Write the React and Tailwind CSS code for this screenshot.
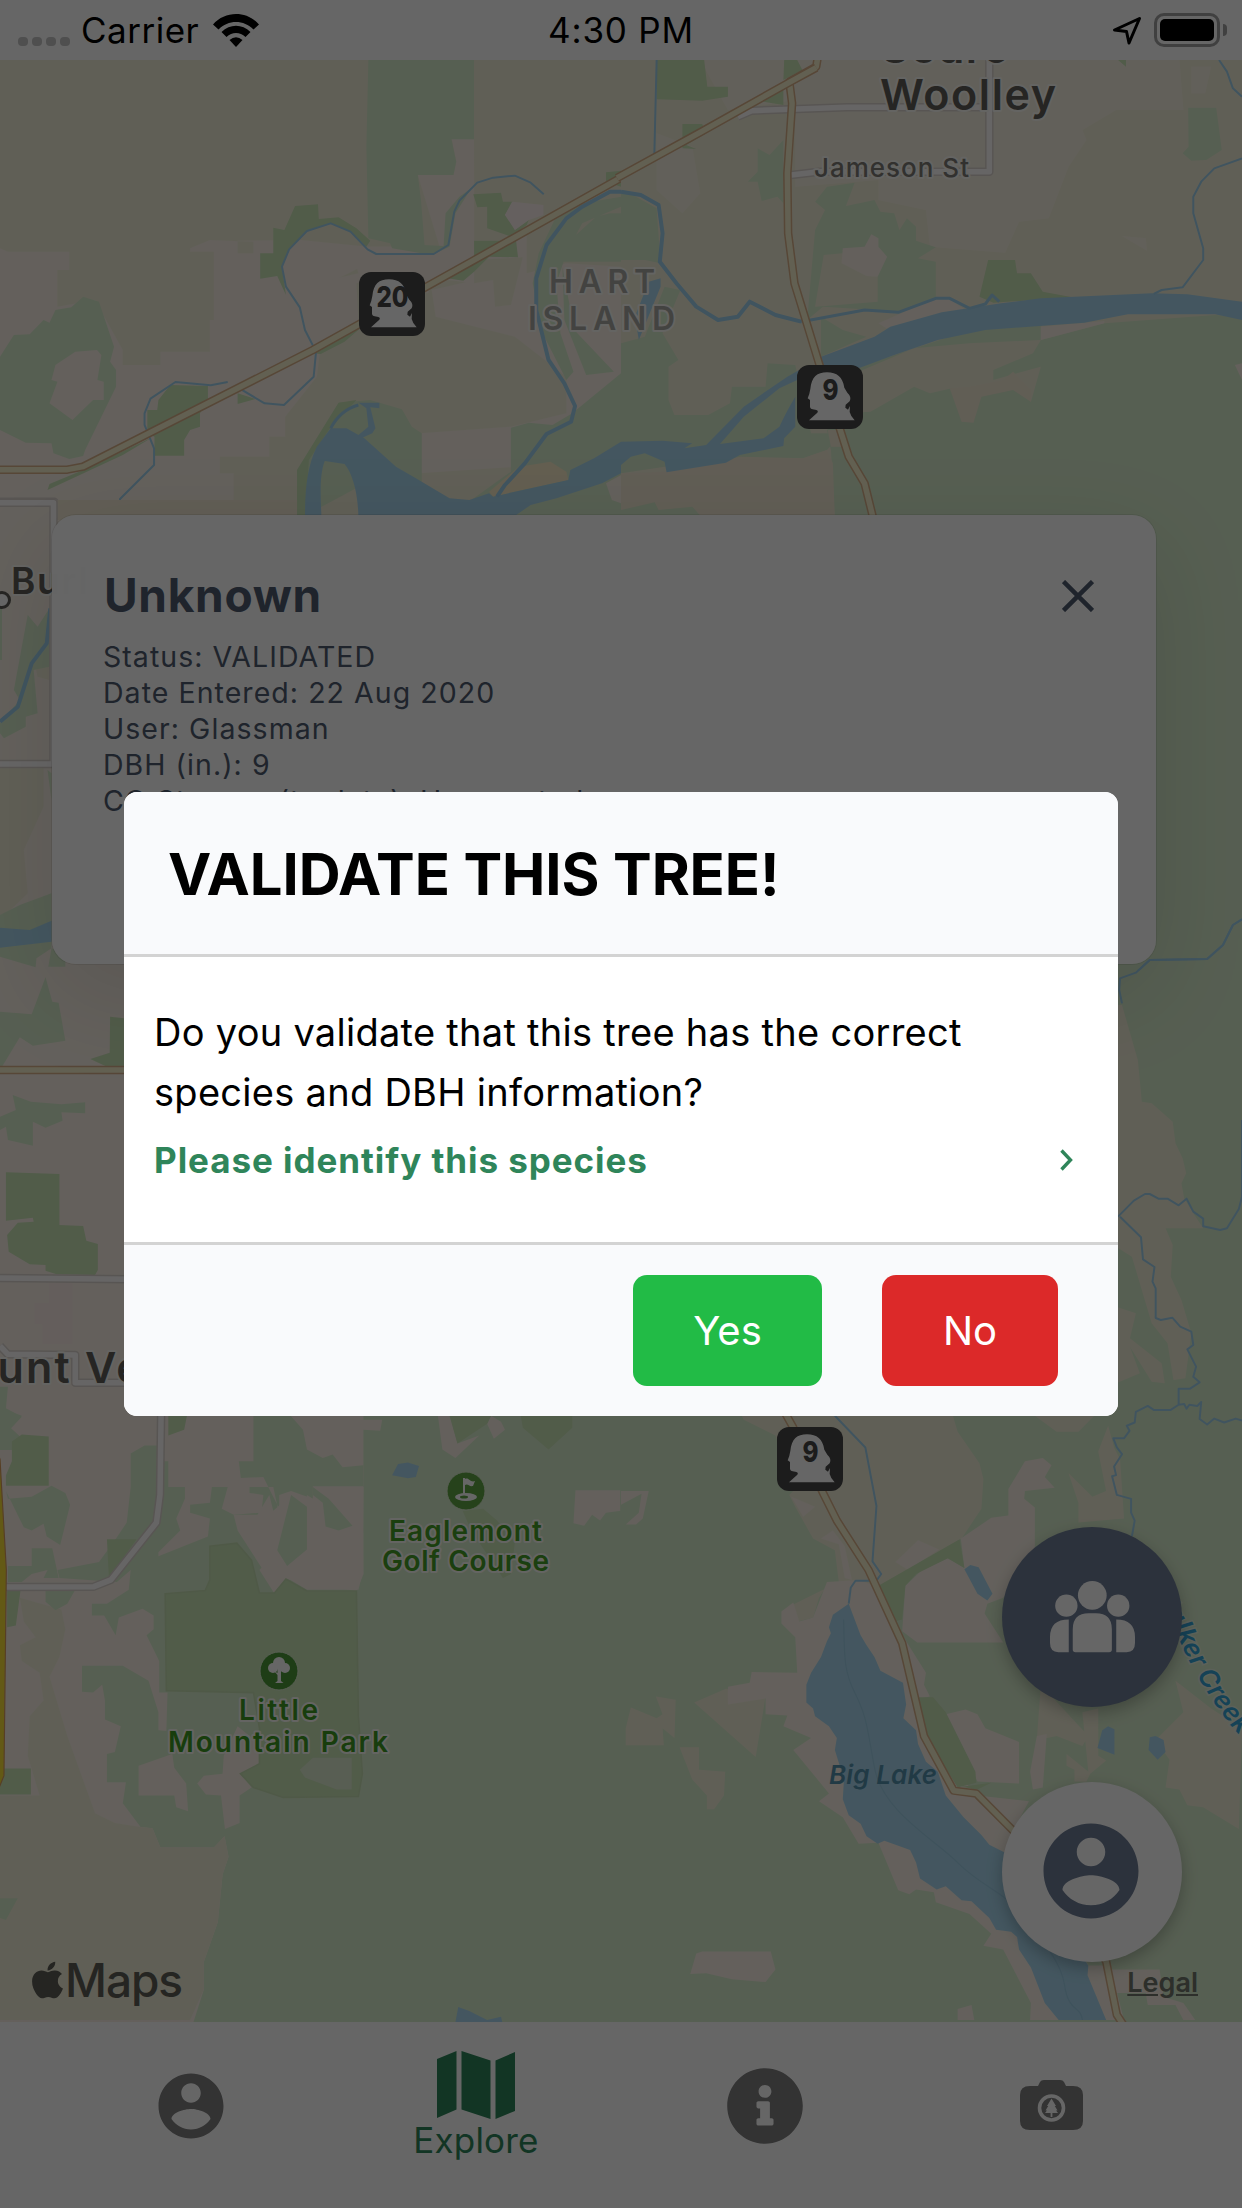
import React from "react";
import { FaApple, FaInfoCircle } from "react-icons/fa";

const LIGHT = "#f9f1e6";
const FIELD = "#f1eed8";
const FOREST = "#d8edcd";
const PARK = "#cae5b7";
const WATER = "#aad8ef";

const ACCOUNT =
  "M12 2C6.48 2 2 6.48 2 12s4.48 10 10 10 10-4.48 10-10S17.52 2 12 2zm0 3c1.66 0 3 1.34 3 3s-1.34 3-3 3-3-1.34-3-3 1.34-3 3-3zm0 14.2c-2.5 0-4.71-1.28-6-3.22.03-1.99 4-3.08 6-3.08 1.99 0 5.97 1.09 6 3.08-1.29 1.94-3.5 3.22-6 3.22z";

function Tile({ x = 0, y, children }) {
  return (
    <g transform={`translate(${x} ${y}) scale(.39605 .33333)`}>{children}</g>
  );
}

function Highway({ d }) {
  return (
    <g fill="none" strokeLinejoin="round">
      <path d={d} stroke="#d9b18a" strokeWidth="8.5" vectorEffect="non-scaling-stroke" />
      <path d={d} stroke="#f6f0cc" strokeWidth="5.5" vectorEffect="non-scaling-stroke" />
    </g>
  );
}

function Street({ d }) {
  return (
    <g fill="none" strokeLinejoin="round">
      <path d={d} stroke="#dcd5cf" strokeWidth="8.5" vectorEffect="non-scaling-stroke" />
      <path d={d} stroke="#fffdfd" strokeWidth="5.5" vectorEffect="non-scaling-stroke" />
    </g>
  );
}

function Stream({ d, w = 2 }) {
  return <path d={d} fill="none" stroke="#a0d2ee" strokeWidth={w} strokeLinejoin="round" vectorEffect="non-scaling-stroke" />;
}

function Label({ x, y, size, width, fill, halo = "#fbfaf4", weight = 600, children, ...rest }) {
  return (
    <text
      x={x}
      y={y}
      fontSize={size}
      fontWeight={weight}
      textLength={width}
      fill={fill}
      stroke={halo}
      strokeWidth="4"
      strokeLinejoin="round"
      style={{ paintOrder: "stroke" }}
      {...rest}
    >
      {children}
    </text>
  );
}

function RouteShield({ x, y, label }) {
  return (
    <g transform={`translate(${x} ${y})`}>
      <rect width="66" height="64" rx="12" fill="#464646" />
      <path
        transform="translate(-4 -4) scale(.3333)"
        fill="#fff"
        d="M48 178L73 155Q77 149 70 147L56 144Q50 142 51 132V117L44 112Q50 98 52 84C56 48 72 34 102 34S149 48 154 80L163 95Q177 108 170 121L158 131L157 140L165 146L171 135L170 153L175 165L185 178Z"
      />
      <text
        x="33.5"
        y="35"
        fontSize="29"
        fontWeight="800"
        textAnchor="middle"
        fill="#464646"
        textLength={label.length > 1 ? 32 : 16}
        lengthAdjust="spacingAndGlyphs"
      >
        {label}
      </text>
    </g>
  );
}

function MapCanvas() {
  return (
    <svg className="block h-full w-full" viewBox="0 60 1242 1962" fontFamily="Inter, sans-serif">
      <rect width="1242" height="2208" fill={LIGHT} />

      <Tile y="0">
        <path fill={FIELD} d="M0 180H1568V800L1430 790 1330 820 1200 780V840L1090 870 1100 950 1300 1010 1430 1130V1240L1290 1280 1060 1300 1060 1420 1568 1380V1560H590V1420H555V1370H680V1310H720V1250L800 1130 830 850 930 790 1000 740H930L760 720 600 722V760H640V725L530 720 480 745V755H540V960H530V1055H405V1095H310V1050L240 900 145 920V810H175V755H20L0 745Z" />
        <path fill={LIGHT} d="M1055 525H1145L1152 485 1140 415 1197 418V722H1300V700L1330 690 1330 820 1310 990 1300 1010 1270 910 1200 850 1130 840 1090 860 1080 880 920 800 935 740 1110 740ZM760 890L830 840 905 820 900 800 940 790 960 830 900 850 905 960 800 1040Z" />
        <path fill={FIELD} d="M1197 418L1440 560 1400 600 1300 560 1200 560ZM1197 780L1320 772 1290 915 1250 920 1245 840 1197 850Z" />
        <path fill={FOREST} d="M930 180H1197V418H1140L1152 485 1145 525H1055L1063 600 1072 735 1120 738 1125 640 1160 590 1190 565 1150 640 1135 740 1090 765 990 745 985 730 930 715 925 440Z" />
        <path fill={PARK} d="M745 618 803 613 805 657 855 652 900 685 935 722 925 740 885 695 835 670 775 693 730 748 712 800 722 885 700 828 657 836V760H690V683L718 690ZM1195 583 1265 578 1270 605 1295 605 1275 645 1290 655 1300 690 1335 660 1330 675 1290 710 1230 685V620L1205 622ZM1197 722H1303L1308 772 1235 770 1197 815 1170 842 1130 835 1197 780ZM1530 517 1568 512V560L1530 545Z" />
        <path fill="#fdf0ee" d="M1293 605 1372 615V645L1335 660 1300 690 1275 645Z" />
        <path fill={FOREST} fillRule="evenodd" d="M0 1070L35 1005 75 1003 110 960 125 968 140 930 180 922 210 890 250 905 288 1040 278 1085 293 1110V1160L215 1350 210 1368 175 1377 135 1360 130 1330 65 1328 0 1290ZM140 1095L190 1055 245 1050 256 1065 246 1140 262 1145V1200H235L183 1260 125 1210 145 1145 130 1140Z" />
        <path fill={PARK} d="M400 1200L430 1155 525 1158V1200L505 1240V1280L480 1290 465 1320V1367H390V1310L372 1300V1230H397ZM120 1470L125 1452 210 1410 385 1312 310 1365ZM600 1180 645 1197 600 1212ZM790 1060 910 985 870 1025 810 1062Z" />
        <path fill={FOREST} d="M750 1560V1410L855 1208 935 1200 1015 1228 1040 1280 1065 1300V1450L1000 1400Z" />
        <path fill={PARK} d="M750 1560V1410L855 1208 900 1200 830 1290 780 1380 770 1560Z" />
        <path fill={FOREST} d="M1290 1283 1335 1268 1395 1275 1445 1240 1568 1120V1560H1340L1190 1500 1290 1415ZM1568 590L1470 610 1400 660 1360 760 1345 850 1370 1000 1430 1140 1448 1115 1415 1000 1405 850 1430 760 1470 670 1568 620ZM1568 640H1540L1505 650 1440 720 1410 785H1568ZM1420 800 1425 960 1480 1125 1550 1115 1450 990Z" />
        <path fill="#f8ebc9" d="M1310 1400 1390 1385 1430 1415 1435 1440 1245 1490 1235 1475Z" />
        <path fill={WATER} d="M835 1285 875 1285 920 1315 1000 1400 1050 1435 1135 1495 1185 1500 1235 1480 1245 1490 1435 1440 1440 1410 1500 1375 1568 1325V1420L1520 1450 1405 1495 1340 1515 1285 1560H905C905 1480 890 1420 870 1392L820 1383C805 1430 810 1500 812 1560H770C770 1470 775 1400 800 1340ZM905 1208H958V1225L935 1222 948 1285 940 1300 912 1315 905 1305 930 1280 925 1225Z" />
        <path fill={LIGHT} d="M1568 1425L1530 1450 1545 1500 1568 1510Z" />
        <Stream d="M1373 583 1340 548 1300 527 1245 533 1205 548 1160 602 1147 635 1132 735 1095 762H950L928 748 885 695 835 670 775 693 730 748 712 800 722 860 757 922 770 990 798 1055 792 1130 717 1215 668 1210 593 1157" />
        <Stream d="M575 1146 532 1156 443 1146 380 1196 365 1240V1275L389 1345V1395L303 1497V1530L310 1560" />
        <Stream w="4" d="M1568 575H1540L1470 620 1430 655 1380 735 1354 835V930L1385 1080 1425 1150 1452 1218 1442 1265 1380 1302 1325 1390 1275 1455 1255 1490" />
        <Stream d="M835 1285C850 1250 875 1225 905 1215" w="3" />
        <Street d="M0 1505H137V1560" />
        <Highway d="M0 1409H170L210 1400 790 1050 1190 785 1580 525" />
      </Tile>

      <Tile x="621" y="0">
        <rect y="180" width="1600" height="1400" fill={FIELD} />
        <path fill="#f6f0e2" d="M200 180H1280L1410 180 1420 330H1250L1165 390 1175 420 1130 500 1080 655 1005 665 970 758 780 740 770 630 650 600V540L440 560V300L270 330ZM90 400 180 440 200 580 155 640 90 570ZM1440 200H1490L1475 280H1440ZM1265 708 1325 715 1328 752Z" />
        <path fill={PARK} d="M90 180H210L218 260H270V290L205 302 90 298ZM412 180H445L458 210 410 240ZM330 300 410 250V315ZM155 372H205L215 400 165 435 190 447 155 445ZM1255 180H1275V200Z" />
        <path fill={FOREST} d="M345 445 375 465 410 420V610L395 590 355 603 345 545 320 545 345 515ZM490 605 520 560 590 548 568 618 640 600 655 635 690 640 703 690 722 655 745 680V722L795 742 750 775 795 785V905L700 935 640 930 510 920 470 960 490 690 515 630ZM1432 323H1503L1517 450 1478 480 1440 482 1418 460 1433 440Z" />
        <path fill={FIELD} d="M512 765 560 760 648 830V905L490 920Z" />
        <path fill={LIGHT} d="M560 745 615 740 632 703 650 715V740L672 770 648 830 620 828 557 790ZM650 970 790 897 830 897 870 930 810 940 670 985Z" />
        <path fill={PARK} d="M927 780H995L1000 820 1035 820 1065 875 1140 892 940 908 905 890Z" />
        <path fill={FOREST} d="M0 640V780H60L100 790 90 625 30 585 0 580ZM0 1030 60 1010 110 860 150 870 105 1000 145 1080 120 1100V1200L135 1245H220L275 1210 280 1160H365L370 1090 440 1095 480 1300H560L520 1350 460 1375H300L110 1400 0 1420ZM1568 950V1560H540L530 1350 520 1290 560 1240 630 1235 740 1160 780 1180 835 1165 890 1185 990 1165 1035 1205 1060 1100 940 1140V1110L1040 1060 1060 1020 1220 970 1500 945ZM500 1110 640 1085 880 990 1060 970V1020L880 1030 740 1045 600 1115ZM505 950 560 990 620 1010 505 1070Z" />
        <path fill={LIGHT} d="M1060 980 1220 963V970L1060 1020ZM1550 1095 1568 1090V1140Z" />
        <path fill="#f3ead5" d="M830 1165 860 1265 890 1268 910 1190 990 1170 1035 1205V1170L990 1115 965 1140 880 1160ZM0 1420 110 1415 300 1370 460 1375 520 1350 535 1390 540 1560H0ZM522 1290 550 1290 560 1340 530 1340Z" />
        <path fill={FOREST} d="M0 1530 85 1507 95 1530 180 1520 210 1560H0Z" />
        <path fill={WATER} d="M505 1070 640 1010 680 980 810 937 960 910 1060 895 1340 880 1430 883 1568 905V960L1500 943H1280L1170 968 920 990 800 1020 690 1065 600 1105 510 1110ZM70 845 100 835V860L45 1020 35 950Z" />
        <path fill={WATER} d="M450 1110 420 1130 310 1220 215 1335 160 1345 180 1330 105 1322 0 1325V1395L25 1370 60 1360 110 1385 115 1417 265 1388 300 1365 410 1338 412 1315 440 1280V1190Q415 1240 400 1280L360 1315 250 1332 310 1250 400 1165 445 1140Z" />
        <Stream w="4" d="M0 575 50 585 95 615 105 700 98 785 140 850 190 920 245 960 295 950 325 905 390 945 455 965" />
        <Stream w="3" d="M455 965 615 930 700 937 795 895 830 895 880 925 920 912 937 885 955 905" />
        <Stream d="M90 180 84 470M1510 180 1530 215 1545 265 1568 290M1568 475 1498 505 1465 545 1445 590V640L1470 745V780L1418 862 1365 870 1345 882" />
        <Street d="M295 350 330 332 570 322H930M930 180V515H870M430 525 500 515H880" />
        <Highway d="M497 170 493 200 425 245 432 310 420 520 422 700 438 850 500 1090 575 1370 615 1450 640 1570" />
        <Highway d="M-10 534 200 397 425 247 493 203" />
      </Tile>

      <Tile y="500">
        <path fill="#f3ead5" d="M145 0H590V60H145ZM590 0H750V60H590Z" />
        <path fill={FIELD} d="M0 805H110V920L60 1050 70 1180 0 1260ZM85 480H125V540L95 530Z" />
        <path fill={FOREST} d="M0 325H5V480H0ZM70 345 95 380 125 325V500L85 510 95 640 65 650V680L10 715 0 700V670L50 600 35 570ZM0 1245 50 1215 130 1180V1345L165 1360V1400H122L130 1345 92 1375 90 1402 0 1370ZM120 810 130 820V900Z" />
        <path fill={WATER} d="M0 1283 75 1290 130 1262V1325L0 1343Z" />
        <Stream w="4" d="M127 325 118 430 80 490 45 620 0 665" />
        <Street d="M0 8H135V790M0 792H133" />
      </Tile>

      <Tile x="621" y="500">
        <path fill={FOREST} d="M1180 30H1568V1500H1180Z" />
        <Stream d="M1568 1258 1545 1275 1520 1335 1480 1377 1335 1380 1300 1418 1260 1435 1258 1470 1263 1500" />
      </Tile>

      <Tile y="950">
        <path fill={FOREST} d="M0 185 80 193 115 82 132 155 148 158 165 272 83 287 50 262 5 350 0 350ZM32 435 78 455 155 463 215 457V490L155 487 158 512 115 533 83 515V587L20 570 15 530 0 540V500L40 480ZM0 1310H20L15 1375 55 1400 28 1435 60 1470 40 1500H0Z" />
        <path fill={PARK} d="M278 200 313 205V350H270L228 327 277 308ZM15 667 150 672V825L210 828 218 872 247 882V960L240 975 143 973 115 962V945L75 943 22 905 18 855 45 818 85 815 83 803 15 812Z" />
        <path fill="#fbeae6" d="M123 998H183V1183H107V1123H87V1060H123Z" />
        <Highway d="M0 360H330" />
        <Street d="M0 984 330 988M0 1188 20 1213 190 1215V1298H330" />
      </Tile>

      <Tile x="621" y="950">
        <path fill={FOREST} d="M1180 60H1580V1500H1180Z" />
        <path fill={FIELD} d="M1255 165H1265L1305 330 1315 455 1340 460 1393 515 1400 580 1418 625 1427 670 1415 700 1422 745 1445 790 1470 835H1375L1393 885 1388 980 1415 1050 1440 1150 1425 1285 1395 1290 1380 1180 1340 1120 1290 920 1250 890V400ZM1250 1070 1300 1090 1285 1165 1365 1240 1373 1300 1340 1295 1285 1190 1310 1270 1250 1300Z" />
        <Stream d="M1568 -92 1545 -75 1520 -15 1480 27 1335 30 1300 68 1260 85 1258 120 1265 160M1255 800 1295 752 1323 732H1335L1357 746H1380L1408 766 1428 746 1445 785 1470 806V829L1513 840 1530 835 1560 777 1568 740V510M1260 800 1313 862 1318 928 1347 951 1342 995 1350 1015V1104L1363 1110 1392 1103 1412 1130 1440 1145 1445 1185 1430 1198 1452 1250 1445 1280 1461 1297 1437 1316H1408V1367L1388 1380H1345L1330 1370 1300 1386 1297 1413 1277 1425 1284 1438 1270 1465H1243L1252 1500M1408 1367 1422 1365 1428 1378 1435 1366 1455 1368 1465 1357 1461 1408 1480 1422 1498 1405 1523 1417 1552 1405 1568 1412" />
      </Tile>

      <g transform="translate(0 1400) scale(.39605 .3954)">
        <path fill={FOREST} d="M640 0V155H603L608 197 665 195 705 275V240L735 230 790 250V218H918V0ZM917 0H1600V1600H480L515 1490V1420L550 1320 562 1200 577 1155 567 1103 540 1132H405L385 1083 355 1080 310 1020 318 967H270V895L290 890 305 825 265 808V760L258 720 235 740 207 738V672H310L375 710 400 790V835L420 837 423 740 402 740V660L370 595 388 580V545L360 528 300 550 292 595 263 545H232V515H270L325 480 330 430 295 460 150 450 145 430 250 410 290 355 320 310 330 220V135L365 115H400V155H425V220H467V250L445 300 455 330 400 385V395L525 345 530 300 480 285V265L530 260 535 220H575L560 275 590 290 660 285 665 240 630 235V220H690L720 360 655 430 692 488 722 453 900 483 918 440Z" />
        <path fill={LIGHT} d="M725 30 765 75 775 125 815 147 840 138 865 170 917 165V75L960 78 965 50H917V30ZM1105 35 1117 125 1150 147 1210 90 1155 110 1135 35ZM1240 40 1230 60 1247 98 1275 75 1265 55ZM690 280 735 240 775 270V378L725 420 705 400 690 470 600 330 590 290 650 290 680 240ZM790 250 825 320 890 318 830 220H918L915 440 905 480H775L725 450 730 425 775 378V240ZM1453 228H1568V280L1530 285 1515 305 1495 290 1475 318 1448 312ZM350 925 435 895 440 930 470 970 475 1040 445 1030 440 1000H350ZM498 970 515 950 562 945 565 900 600 825 655 870V920L607 945 635 980 605 1000V1070L568 1085 558 1000 520 998Z" />
        <path fill={FIELD} d="M50 500 155 530 165 580 150 650 125 700 170 850 240 1045 290 1070 355 1080 385 1083 405 1132H540L567 1103 577 1155 562 1200 550 1320 515 1420V1490L480 1568H0V1000H100L70 900 75 800 110 760 100 690 55 660 50 620 90 600 60 560Z" />
        <path fill={FOREST} d="M0 0H15L15 25 55 40 25 70 45 90 20 110 0 105ZM20 250 80 245 130 217 165 235 177 265 152 367 118 345 110 313 80 330 60 322 15 230ZM20 420H80V375H132L148 450H110L120 430 80 440 55 460H20ZM115 480H190L170 515 140 532 115 510ZM0 1260H45L15 1315 0 1310ZM700 380 735 240 775 270V378L725 420ZM790 220 830 250 890 318 855 330 822 320 815 260 790 240Z" />
        <path fill={PARK} d="M30 105 55 87 123 92V217H15V190L30 155ZM425 40H472L465 75 425 90ZM0 932H78V998H0ZM270 352H345L275 450ZM1135 40H1240L1230 60 1155 110ZM1315 40H1445V70L1385 125 1320 70ZM1168 280 1220 275 1255 305 1300 360 1290 440 1270 450 1190 330ZM18 480H52L40 570 18 575Z" />
        <path fill={PARK} stroke="#c6dfb2" strokeWidth="4" d="M417 490 518 482 530 455V370L598 362 635 405 655 488H693L722 453 775 483H900L905 800 915 945 905 1003 715 1005 640 980 607 945 655 920V830L640 740 420 735Z" />
        <path fill="#dcebcf" d="M757 935 790 905H888V985H850L770 955Z" />
        <path fill={WATER} d="M1005 162 1030 158 1058 167 1050 195 1030 198 990 190ZM1157 1535 1185 1545 1230 1568 1265 1560 1275 1600H1145Z" />
        <Street d="M407 20 404 240 395 310 280 455 237 472 0 473" />
        <path fill="#f7df35" stroke="#d99c5e" strokeWidth="3" d="M-10 120 0 150 16 430 10 950 -10 1000Z" />
      </g>

      <g transform="translate(621 1400) scale(.39605 .3954)">
        <rect width="1600" height="1600" x="-2" fill={FOREST} />
        <path fill={FIELD} d="M305 40H838L850 80 905 160 915 200 910 275 860 350 655 470H520L500 500 485 550 445 560 430 520 550 460 540 380 485 350 440 270 425 240 440 225 390 90 310 50ZM1045 40H1195L1155 80H1100ZM1230 65 1245 120 1260 150 1270 300 1155 310V260L1130 185 1190 245 1225 230 1205 130ZM1400 710 1490 780 1568 830 1560 1085 1470 1030 1430 1025 1410 985 1375 980 1385 910 1350 860 1420 790ZM185 765 265 730 365 750 340 903ZM148 878H197V935L263 940 260 1000 235 1035H217V1000L180 960ZM88 750 138 758 135 855 105 830 108 873H12V830L25 778 90 805 105 795ZM1125 895 1180 940 1165 790 1205 780 1205 900 1225 912 1185 945 1175 965H1145V935L1125 925ZM1060 720 1180 850 1165 875 1100 850 1050 860Z" />
        <path fill={LIGHT} d="M858 350 935 298 978 292V225L1020 155 1065 147 1087 165 1070 195 1095 222 1020 230 1018 250 1045 272V400L965 500 925 515 918 540 965 613H748L710 585 718 470 760 430 825 400 867 425ZM693 410 750 355 803 378 725 430ZM0 230H70L55 300 38 315H12L45 285 52 237 0 265ZM430 245 490 270 460 295ZM505 350 535 330 565 370 583 455 565 450 550 365ZM405 535 435 512 450 560 485 550 520 460 600 455 640 470 720 610 745 650 770 690 765 720 780 750 755 755 770 860 900 1000 1030 1015 990 1090 1180 1430H1235L1270 1568H1033L1035 1525 965 1390 915 1380 935 1350 880 1300 795 1270 790 1245 745 1238 728 1250 700 1240 650 1120 600 1122 560 1055 500 1015 525 995 435 885 480 855 410 825 420 798 365 795V755L270 770V725L325 715 330 688 445 690 440 600 405 565ZM820 795 870 783 900 795 920 830 1005 865V970L900 965ZM1050 850 1075 845 1065 980 1040 985 1033 940ZM190 1400 205 1395H378L390 1440 365 1472 280 1465 215 1450 175 1452ZM850 1540 885 1530 892 1568H850ZM1220 1440H1360L1370 1510 1420 1525 1450 1568H1420L1400 1530H1330L1325 1500H1230Z" />
        <path fill={PARK} d="M650 470 855 352 867 425 825 400 745 440 718 470 710 555 690 560ZM750 752H788L820 790 895 940 897 968 850 980 800 900 765 850ZM860 978 935 968 900 985Z" />
        <path fill={WATER} d="M575 515 605 595 620 620 640 650 655 685 712 715 720 770 713 805 745 835 750 870 770 915 800 940 820 1000 865 1055 910 1100 930 1125 1000 1160 1180 1430 1178 1455 1225 1568H1105L1070 1525 1035 1435 1005 1390 1000 1358 985 1345 947 1340 930 1310 885 1268 860 1265 820 1230 797 1238 755 1210 745 1170 730 1138 665 1115 648 1122 620 1103 605 1072 575 1050 560 1010 563 960 540 885 545 855 525 825 490 800 485 780 468 765V720L480 690 505 650 520 610 530 590 525 575 535 543ZM867 428 882 417 903 423 938 490 925 507 900 490ZM1215 835 1230 825 1246 833V897L1203 880ZM1335 853 1350 850 1370 860 1375 890 1355 910 1332 885Z" />
        <path fill="none" stroke="#9dcde6" strokeWidth="3" d="M562 555C565 640 560 680 590 740S620 820 640 930 790 1110 850 1170 960 1240 1000 1290 1110 1410 1120 1480 1160 1530 1165 1568" />
        <Stream d="M540 40 617 120 645 268 635 408 657 440 645 457H592L580 475 575 515M1408 0V12L1388 25H1345L1330 15 1300 30 1297 57 1277 65 1284 78 1270 97H1243L1252 120 1265 137 1245 168 1250 190 1240 193 1252 240 1288 250V285L1297 305 1290 345M1408 12 1422 10 1428 22 1435 12 1455 15 1465 5 1461 48 1480 62 1498 47 1523 57 1552 47 1568 52" />
        <Highway d="M410 25 435 70 510 235 545 305 625 430 710 615 765 850 840 988 897 995 1080 1180 1225 1420 1252 1555 1275 1590" />
      </g>

      <Label x="881" y="62.500" size="43" width="150" fill="#5f5d58">Sedro-</Label>
      <Label x="880" y="109.500" size="43" width="176" fill="#5f5d58">Woolley</Label>
      <Label x="814" y="177" size="26" width="155" weight="500" fill="#7d7a76">Jameson St</Label>
      <Label x="549" y="293" size="32" width="106" fill="#a9a8a2">HART</Label>
      <Label x="528" y="329.500" size="32" width="147" fill="#a9a8a2">ISLAND</Label>
      <circle cx="2" cy="600" r="7.500" fill="#fff" stroke="#5f5d58" strokeWidth="3" />
      <Label x="11" y="593.500" size="37" width="77" fill="#5f5d58">Burl</Label>
      <Label x="-73" y="1382.500" size="43" width="320" fill="#5f5d58">Mount Vernon</Label>
      <Label x="389" y="1541" size="28" width="153" fill="#449e26">Eaglemont</Label>
      <Label x="382" y="1571" size="28" width="167" fill="#449e26">Golf Course</Label>
      <Label x="239" y="1720" size="28" width="79" fill="#3c9a22">Little</Label>
      <Label x="168" y="1752" size="28" width="220" fill="#3c9a22">Mountain Park</Label>
      <Label x="829" y="1784" size="26" width="108" fill="#5391ad" halo="none" fontStyle="italic">Big Lake</Label>
      <path id="creek" fill="none" d="M1140 1588Q1165 1610 1175 1630Q1195 1680 1232 1727L1290 1790" />
      <text fontSize="26" fontWeight="600" fontStyle="italic" fill="#35a5d8" stroke="#e6f3e2" strokeWidth="3" style={{ paintOrder: "stroke" }}>
        <textPath href="#creek" startOffset="10">Walker Creek</textPath>
      </text>

      <g transform="translate(466 1491)">
        <circle r="19" fill="#5fa645" stroke="#dcecd0" />
        <g fill="#fff">
          <path d="M-3-13H-1V-12C3-14 4-8 9-10L7-5C3-4 2-8-1-6V3H-3Z" />
          <path fillRule="evenodd" d="M-11 6a11 4 0 1 0 22 0a11 4 0 1 0-22 0ZM-6 6a4 1.500 0 1 0 8 0a4 1.500 0 1 0-8 0Z" />
        </g>
      </g>
      <g transform="translate(279 1671)">
        <circle r="19" fill="#4c9a38" stroke="#dcecd0" />
        <g fill="#fff">
          <circle cx="0" cy="-8" r="6" />
          <circle cx="-6" cy="-3" r="5" />
          <circle cx="6" cy="-3" r="5" />
          <path d="M-1.500-4H2L2 10 4.500 12H-4L-1.500 10V4L-5 0-1.500 2Z" />
        </g>
      </g>

      <RouteShield x="359" y="272" label="20" />
      <RouteShield x="797" y="365" label="9" />
      <RouteShield x="777" y="1427" label="9" />
    </svg>
  );
}

function StatusBar() {
  return (
    <header className="grid h-[60px] grid-cols-3 items-center bg-white text-[35px] leading-[58px] text-black">
      <div className="flex h-[58px] items-center pl-[18px]">
        <div className="flex gap-1 pt-[22px]">
          {[0, 1, 2, 3].map((dot) => (
            <span key={dot} className="h-[9px] w-[10px] rounded-[4px] bg-[#c6c6c6]" />
          ))}
        </div>
        <span className="ml-[11px] tracking-[0.5px]">Carrier</span>
        <svg className="ml-[14px] h-[33px] w-[46px]" viewBox="0 0 46 33">
          <path d="M0 10.500C12-3.500 34-3.500 46 10.500L40.500 15.500C31 5.500 15 5.500 5.500 15.500Z" />
          <path d="M8.500 18C17 9.500 29 9.500 37.500 18L32.500 23C27 17.500 19 17.500 13.500 23Z" />
          <path d="M16.500 26Q23 20.500 29.500 26L23 33Z" />
        </svg>
      </div>
      <div className="h-[58px] text-center tracking-[0.8px]">4:30 PM</div>
      <div className="flex h-[58px] items-center justify-end pr-[15px]">
        <svg className="mr-[12px] h-[29px] w-[30px]" viewBox="0 0 30 29" fill="none" stroke="#000" strokeWidth="3" strokeLinejoin="round">
          <path d="M2.500 14 27.500 2.500 17 27 14.500 15.500Z" />
        </svg>
        <div className="h-[34px] w-[66px] rounded-[10px] border-3 border-[#a0a0a0] p-[3px]">
          <div className="h-full w-full rounded-[5px] bg-black" />
        </div>
        <div className="ml-[3px] h-[12px] w-[4px] rounded-r-full bg-[#a0a0a0]" />
      </div>
    </header>
  );
}

function TreeCard() {
  const details = [
    "Status: VALIDATED",
    "Date Entered: 22 Aug 2020",
    "User: Glassman",
    "DBH (in.): 9",
    "CO Storage (to date): Unreported",
  ];
  return (
    <section className="absolute top-[455px] left-[52px] h-[449px] w-[1104px] rounded-[24px] bg-white/98 px-[51px] pt-[53px] text-[#4f5b6f] shadow-[0_0_0_1px_rgba(0,0,0,0.08),0_30px_100px_rgba(0,0,0,0.1)]">
      <div className="flex h-[54px] items-center justify-between">
        <h2 className="pl-px text-[46px] leading-[54px] font-bold tracking-[0.7px]">Unknown</h2>
        <svg className="mt-[2px] mr-[11px] h-[32px] w-[32px]" viewBox="0 0 32 32" fill="none" stroke="currentColor" strokeWidth="4.500">
          <path d="M1.500 1.500 30.500 30.500M30.500 1.500 1.500 30.500" />
        </svg>
      </div>
      <ul className="mt-[17px] text-[28.5px] leading-[36px] tracking-[1.05px]">
        {details.map((line) => (
          <li key={line}>{line}</li>
        ))}
      </ul>
    </section>
  );
}

function FloatingActions() {
  return (
    <div className="absolute right-[60px] bottom-[60px] flex flex-col gap-[75px]">
      <button className="flex h-[180px] w-[180px] items-center justify-center rounded-full bg-[#6e7d96] shadow-[0_6px_16px_rgba(0,0,0,0.25)]">
        <svg className="h-[72px] w-[85px]" viewBox="1083 459 213 181" preserveAspectRatio="none" fill="#fff">
          <circle cx="1189" cy="495" r="36" />
          <circle cx="1124" cy="521" r="28" />
          <circle cx="1254" cy="521" r="28" />
          <path d="M1140 632V580Q1140 540 1180 540H1198Q1238 540 1238 580V632Q1238 638 1231 638H1147Q1140 638 1140 632ZM1130 556V638H1104Q1083 638 1083 615V600Q1083 556 1130 556ZM1249 556V638H1275Q1296 638 1296 615V600Q1296 556 1249 556Z" />
        </svg>
      </button>
      <button className="flex h-[180px] w-[180px] items-center justify-center rounded-full bg-white pr-[2px] pb-[2px] shadow-[0_6px_16px_rgba(0,0,0,0.25)]">
        <svg className="h-[114px] w-[114px]" viewBox="0 0 24 24" fill="#6e7d96">
          <path d={ACCOUNT} />
        </svg>
      </button>
    </div>
  );
}

function TabBar() {
  return (
    <nav className="grid h-[186px] grid-cols-4 bg-white px-[47px] pb-[18px] text-[#7f7f7f]">
      <div className="flex items-center justify-center">
        <svg className="h-[78px] w-[78px]" viewBox="0 0 24 24" fill="currentColor">
          <path d={ACCOUNT} />
        </svg>
      </div>
      <div className="flex flex-col items-center pt-[29px] pr-[3px] text-[#2f855a]">
        <svg className="h-[68px] w-[78px]" viewBox="0 0 78 68" fill="currentColor">
          <path d="M0 8 19.500 0V58.500L0 67ZM24.500 0 53.500 9.500V68L24.500 58.500ZM58.500 9.500 78 1V60L58.500 68Z" />
        </svg>
        <span className="text-[35px] leading-[42px] tracking-[0.2px]">Explore</span>
      </div>
      <div className="flex items-center justify-center">
        <FaInfoCircle className="h-[78px] w-[78px]" />
      </div>
      <div className="flex items-center justify-center pb-[3px]">
        <svg className="h-[50px] w-[63px]" viewBox="0 0 63 50" fill="currentColor">
          <path d="M18 6 20 2Q21 0 24 0H40Q43 0 44 2L46 6H53Q63 6 63 15V41Q63 50 53 50H10Q0 50 0 41V15Q0 6 10 6Z" />
          <circle cx="31.500" cy="28" r="12" fill="none" stroke="#fff" strokeWidth="3.600" />
          <path fill="#fff" d="M31.500 18.500 36 26H34.800L37.500 30.500H36L38 33H32.400V37H30.600V33H25L27 30.500H25.500L28.200 26H27Z" />
        </svg>
      </div>
    </nav>
  );
}

function ValidateDialog() {
  return (
    <div className="absolute inset-0 flex justify-center bg-black/60 pt-[792px]">
      <div role="dialog" className="flex h-[624px] w-[994px] flex-col overflow-hidden rounded-[13px] bg-white text-black">
        <div className="flex h-[165px] items-center border-b-3 border-[#d3d3d3] bg-[#f9fafc] pt-[2px] pl-[44px]">
          <h1 className="text-[58px] leading-none font-bold tracking-[-0.1px] whitespace-nowrap">VALIDATE THIS TREE!</h1>
        </div>
        <div className="h-[288px] border-b-3 border-[#d3d3d3] px-[30px] pt-[45px]">
          <p className="text-[38px] leading-[60px] tracking-[0.28px] whitespace-nowrap">
            Do you validate that this tree has the correct
            <br />
            species and DBH information?
          </p>
          <div className="flex h-[76px] items-center justify-between text-[#2f855a]">
            <span className="text-[35px] font-bold tracking-[0.95px]">Please identify this species</span>
            <svg className="mr-[15px] h-[22px] w-[13px]" viewBox="0 0 13 22" fill="none" stroke="currentColor" strokeWidth="3.400">
              <path d="M1.500 1.500 10.500 11 1.500 20.500" />
            </svg>
          </div>
        </div>
        <div className="flex flex-1 items-center justify-end gap-[60px] bg-[#f9fafc] pr-[60px] text-[40px] text-white">
          <button className="h-[111px] w-[189px] rounded-[14px] bg-[#22bb46]">Yes</button>
          <button className="h-[111px] w-[176px] rounded-[14px] bg-[#dc2929]">No</button>
        </div>
      </div>
    </div>
  );
}

export default function App() {
  return (
    <main className="relative h-[2208px] w-[1242px] overflow-hidden font-['Inter',sans-serif]">
      <StatusBar />
      <div className="relative h-[1962px] overflow-hidden">
        <MapCanvas />
        <div className="absolute bottom-[15px] left-[30px] flex items-center text-[#5d5d55]">
          <FaApple className="h-[42px] w-[35px]" />
          <span className="text-[46px] leading-[54px] font-medium tracking-[-1.1px]">Maps</span>
        </div>
        <div className="absolute right-[44px] bottom-[19px] text-[27px] leading-[40px] font-semibold text-[#70776b] underline">Legal</div>
        <TreeCard />
        <FloatingActions />
      </div>
      <TabBar />
      <ValidateDialog />
    </main>
  );
}
